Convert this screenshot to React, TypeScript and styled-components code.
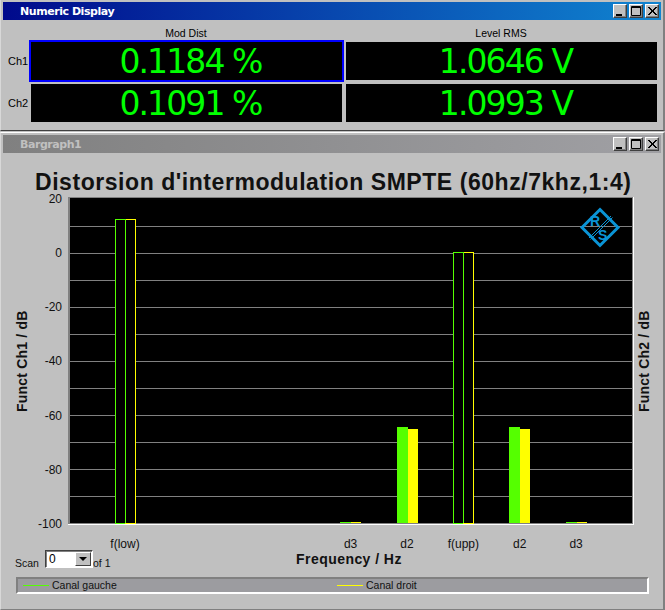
import styled, { createGlobalStyle } from "styled-components";

const GlobalStyle = createGlobalStyle`
  html, body { margin: 0; padding: 0; background: #c0c0c0; }
  body { font-family: "Liberation Sans", Arial, sans-serif; }
`;

const Page = styled.div`
  width: 665px;
  height: 610px;
  overflow: hidden;
  background: #c0c0c0;
`;

const Window = styled.section<{ $h: number }>`
  box-sizing: border-box;
  height: ${(p) => p.$h}px;
  padding: 2px 3px 0 3px;
  background: #c0c0c0;
  border-right: 2px solid #808080;
  border-bottom: 1px solid #404040;
  border-left: 1px solid #d8d8d8;
`;

const ChartWindow = styled(Window)`
  padding-top: 2px;
  border-top: 1px solid #ffffff;
  border-bottom: 1px solid #808080;
  margin-top: 1px;
`;

const TitleBar = styled.header<{ $active?: boolean }>`
  height: 18px;
  margin-left: -1px;
  margin-right: -1px;
  display: flex;
  align-items: center;
  padding: 0 2px 0 17px;
  background: ${(p) =>
    p.$active
      ? "linear-gradient(90deg, #000a8c 0%, #1084d0 100%)"
      : "linear-gradient(90deg, #808080 0%, #a0a0a4 100%)"};
`;

const TitleText = styled.span<{ $active?: boolean }>`
  flex: 1;
  font: bold 11px "DejaVu Sans", sans-serif;
  letter-spacing: -0.45px;
  color: ${(p) => (p.$active ? "#ffffff" : "#c0c0c0")};
`;

const WinButtons = styled.div`
  display: flex;
  gap: 2px;
`;

const WinButton = styled.button`
  box-sizing: border-box;
  width: 14px;
  height: 14px;
  padding: 0;
  display: block;
  background: #c0c0c0;
  border: 1px solid;
  border-color: #ffffff #404040 #404040 #ffffff;
  box-shadow: inset -1px -1px 0 #808080;
  svg { display: block; }
`;

const NumericGrid = styled.div`
  display: grid;
  grid-template-columns: 25px 315px 315px;
  grid-template-rows: 20px 42px 42px;
`;

const ColumnHead = styled.div`
  font: 10.5px "Liberation Sans", sans-serif;
  color: #000;
  text-align: center;
  align-self: end;
  padding-bottom: 1px;
  padding-right: 1px;
`;

const RowHead = styled.div`
  font: 11px "Liberation Sans", sans-serif;
  color: #000;
  display: flex;
  align-items: center;
  padding-left: 4px;
`;

const Readout = styled.div<{ $focus?: boolean }>`
  box-sizing: border-box;
  border: 2px solid ${(p) => (p.$focus ? "#0000ff" : "#c0c0c0")};
  background: #000;
  color: #00ff00;
  font: 33px "DejaVu Sans", sans-serif;
  letter-spacing: -1.9px;
  display: flex;
  align-items: center;
  justify-content: center;
  padding: 2px 0 0 8px;
  line-height: 36px;
  overflow: hidden;
`;

const ChartTitle = styled.h1`
  margin: 0;
  height: 44px;
  padding-top: 16px;
  box-sizing: border-box;
  font: bold 23px/26px "Liberation Sans", sans-serif;
  letter-spacing: 0.55px;
  color: #111;
  white-space: nowrap;
  padding-left: 31px;
`;

const ChartRow = styled.div`
  display: flex;
  height: 328px;
`;

const AxisTitle = styled.div<{ $width: number }>`
  width: ${(p) => p.$width}px;
  writing-mode: vertical-rl;
  transform: rotate(180deg);
  font: bold 14px "Liberation Sans", sans-serif;
  letter-spacing: 0.2px;
  color: #111;
  text-align: center;
  line-height: 20px;
`;

const LeftAxisTitle = styled(AxisTitle)`
  line-height: 36px;
`;

const YTicks = styled.div`
  width: 28px;
  margin: -5px 6px -6px 0;
  display: flex;
  flex-direction: column;
  justify-content: space-between;
  align-items: flex-end;
  font: 12px/14px "Liberation Sans", sans-serif;
  color: #111;
`;

const Plot = styled.svg`
  display: block;
  flex: none;
`;

const XLabels = styled.div`
  display: grid;
  grid-template-columns: repeat(9, 56.4px);
  margin: 12px 0 0 92.8px;
  font: 12px/14px "Liberation Sans", sans-serif;
  color: #111;
  text-align: center;
  height: 14px;
`;

const FooterRow = styled.div`
  display: flex;
  align-items: flex-end;
  padding-left: 11px;
  height: 19px;
`;

const ScanGroup = styled.div`
  width: 281px;
  display: flex;
  align-items: flex-end;
  font: 10.5px/14px "Liberation Sans", sans-serif;
  color: #111;
`;

const ScanLabel = styled.span`
  width: 30px;
`;

const Combo = styled.div`
  box-sizing: border-box;
  width: 48px;
  height: 18px;
  margin-bottom: 2px;
  display: flex;
  align-items: center;
  justify-content: space-between;
  padding-left: 3px;
  background: #fff;
  border: 1px solid;
  border-color: #404040 #ffffff #ffffff #404040;
  box-shadow: inset 1px 1px 0 #808080;
  font: 12px "Liberation Sans", sans-serif;
  color: #000;
`;

const ComboArrow = styled.div`
  box-sizing: border-box;
  width: 16px;
  height: 14px;
  margin-right: 1px;
  display: flex;
  align-items: center;
  justify-content: center;
  background: #c0c0c0;
  border: 1px solid;
  border-color: #ffffff #404040 #404040 #ffffff;
  &::after {
    content: "";
    border-style: solid;
    border-width: 4px 4px 0 4px;
    border-color: #000 transparent transparent transparent;
  }
`;

const XTitle = styled.div`
  font: bold 14px/17px "Liberation Sans", sans-serif;
  letter-spacing: 0.45px;
  color: #111;
  white-space: nowrap;
  margin-bottom: 2px;
`;

const Legend = styled.div`
  box-sizing: border-box;
  height: 17px;
  width: 633px;
  margin: 7px 0 0 12px;
  display: grid;
  grid-template-columns: 314px 1fr;
  align-items: center;
  padding-left: 5px;
  background: #9c9ca0;
  border: 2px solid;
  border-color: #808080 #ffffff #ffffff #808080;
  font: 10.5px/13px "Liberation Sans", sans-serif;
  color: #111;
`;

const LegendItem = styled.div`
  display: flex;
  align-items: center;
  gap: 3px;
`;

const LegendLine = styled.span<{ $color: string }>`
  flex: none;
  width: 26px;
  height: 1px;
  background: ${(p) => p.$color};
`;

const GREEN = "#55ff00";
const YELLOW = "#ffff00";
const LOGO = "#0a94d6";
const GRID = [226, 253, 280, 307, 334, 361, 388, 415, 442, 469, 496];
const TICKS = ["20", "0", "-20", "-40", "-60", "-80", "-100"];
const BOTTOM = 523;

const OUTLINE_BARS = [
  { x: 115, top: 219 },
  { x: 453, top: 252 },
];
const FILLED_BARS = [{ x: 397 }, { x: 509 }];
const FLAT_BARS = [340, 566];
const X_LABELS = ["f(low)", "", "", "", "d3", "d2", "f(upp)", "d2", "d3"];

const WindowControls = () => (
  <WinButtons>
    <WinButton aria-label="Minimize">
      <svg width="12" height="12" viewBox="0 0 12 12">
        <rect x="2" y="9" width="6" height="2" fill="#000" />
      </svg>
    </WinButton>
    <WinButton aria-label="Maximize">
      <svg width="12" height="12" viewBox="0 0 12 12">
        <path d="M1.5 1.5h9v9h-9z M1 2.5h10" fill="none" stroke="#000" />
      </svg>
    </WinButton>
    <WinButton aria-label="Close">
      <svg width="12" height="12" viewBox="0 0 12 12">
        <path d="M2 2l8 8M3 2l8 8M10 2l-8 8M11 2l-8 8" fill="none" stroke="#000" />
      </svg>
    </WinButton>
  </WinButtons>
);

const Logo = () => (
  <g>
    <path d="M600 209.5L618 227.5L600 245.5L582 227.5Z" fill="none" stroke={LOGO} strokeWidth="3" />
    <text x="590" y="226" fontFamily="Liberation Sans, sans-serif" fontWeight="bold" fontSize="14" fill={LOGO}>R</text>
    <text x="598" y="240" fontFamily="Liberation Sans, sans-serif" fontWeight="bold" fontSize="14" fill={LOGO}>S</text>
    <path d="M589 238L611 216M590.5 239.5L612.5 217.5" stroke={LOGO} strokeWidth="1" />
  </g>
);

const BarPlot = () => (
  <Plot width="566" height="328" viewBox="68 197 566 328">
    <rect x="68" y="197" width="566" height="328" fill="#ffffff" />
    <rect x="68" y="197" width="565" height="327" fill="#808080" />
    <rect x="70" y="198" width="562" height="325" fill="#000000" />
    {GRID.map((y) => (
      <line key={y} x1="70" x2="632" y1={y + 0.5} y2={y + 0.5} stroke="#808080" />
    ))}
    <Logo />
    {OUTLINE_BARS.map((b) => (
      <g key={b.x} fill="#000" shapeRendering="crispEdges">
        <rect x={b.x + 0.5} y={b.top + 0.5} width="10" height={BOTTOM - b.top} stroke={GREEN} />
        <rect x={b.x + 10.5} y={b.top + 0.5} width="10" height={BOTTOM - b.top} stroke={YELLOW} />
        <line x1={b.x + 10.5} x2={b.x + 10.5} y1={b.top} y2={BOTTOM} stroke={GREEN} />
      </g>
    ))}
    {FILLED_BARS.map((b) => (
      <g key={b.x}>
        <rect x={b.x} y="427" width="11" height={BOTTOM - 427} fill={GREEN} />
        <rect x={b.x + 11} y="429" width="10" height={BOTTOM - 429} fill={YELLOW} />
      </g>
    ))}
    {FLAT_BARS.map((x) => (
      <g key={x}>
        <rect x={x} y={BOTTOM - 1} width="11" height="1" fill={GREEN} />
        <rect x={x + 11} y={BOTTOM - 1} width="10" height="1" fill={YELLOW} />
      </g>
    ))}
  </Plot>
);

export default function App() {
  return (
    <Page>
      <GlobalStyle />
      <Window $h={131}>
        <TitleBar $active>
          <TitleText $active>Numeric Display</TitleText>
          <WindowControls />
        </TitleBar>
        <NumericGrid>
          <span />
          <ColumnHead>Mod Dist</ColumnHead>
          <ColumnHead>Level RMS</ColumnHead>
          <RowHead>Ch1</RowHead>
          <Readout $focus>0.1184 %</Readout>
          <Readout>1.0646 V</Readout>
          <RowHead>Ch2</RowHead>
          <Readout>0.1091 %</Readout>
          <Readout>1.0993 V</Readout>
        </NumericGrid>
      </Window>
      <ChartWindow $h={478}>
        <TitleBar>
          <TitleText>Bargraph1</TitleText>
          <WindowControls />
        </TitleBar>
        <ChartTitle>Distorsion d'intermodulation SMPTE (60hz/7khz,1:4)</ChartTitle>
        <ChartRow>
          <LeftAxisTitle $width={30}>Funct Ch1 / dB</LeftAxisTitle>
          <YTicks>
            {TICKS.map((t) => (
              <span key={t}>{t}</span>
            ))}
          </YTicks>
          <BarPlot />
          <AxisTitle $width={24}>Funct Ch2 / dB</AxisTitle>
        </ChartRow>
        <XLabels>
          {X_LABELS.map((l, i) => (
            <span key={i}>{l}</span>
          ))}
        </XLabels>
        <FooterRow>
          <ScanGroup>
            <ScanLabel>Scan</ScanLabel>
            <Combo>
              0
              <ComboArrow />
            </Combo>
            <span>of 1</span>
          </ScanGroup>
          <XTitle>Frequency / Hz</XTitle>
        </FooterRow>
        <Legend>
          <LegendItem>
            <LegendLine $color={GREEN} />
            Canal gauche
          </LegendItem>
          <LegendItem>
            <LegendLine $color={YELLOW} />
            Canal droit
          </LegendItem>
        </Legend>
      </ChartWindow>
    </Page>
  );
}
